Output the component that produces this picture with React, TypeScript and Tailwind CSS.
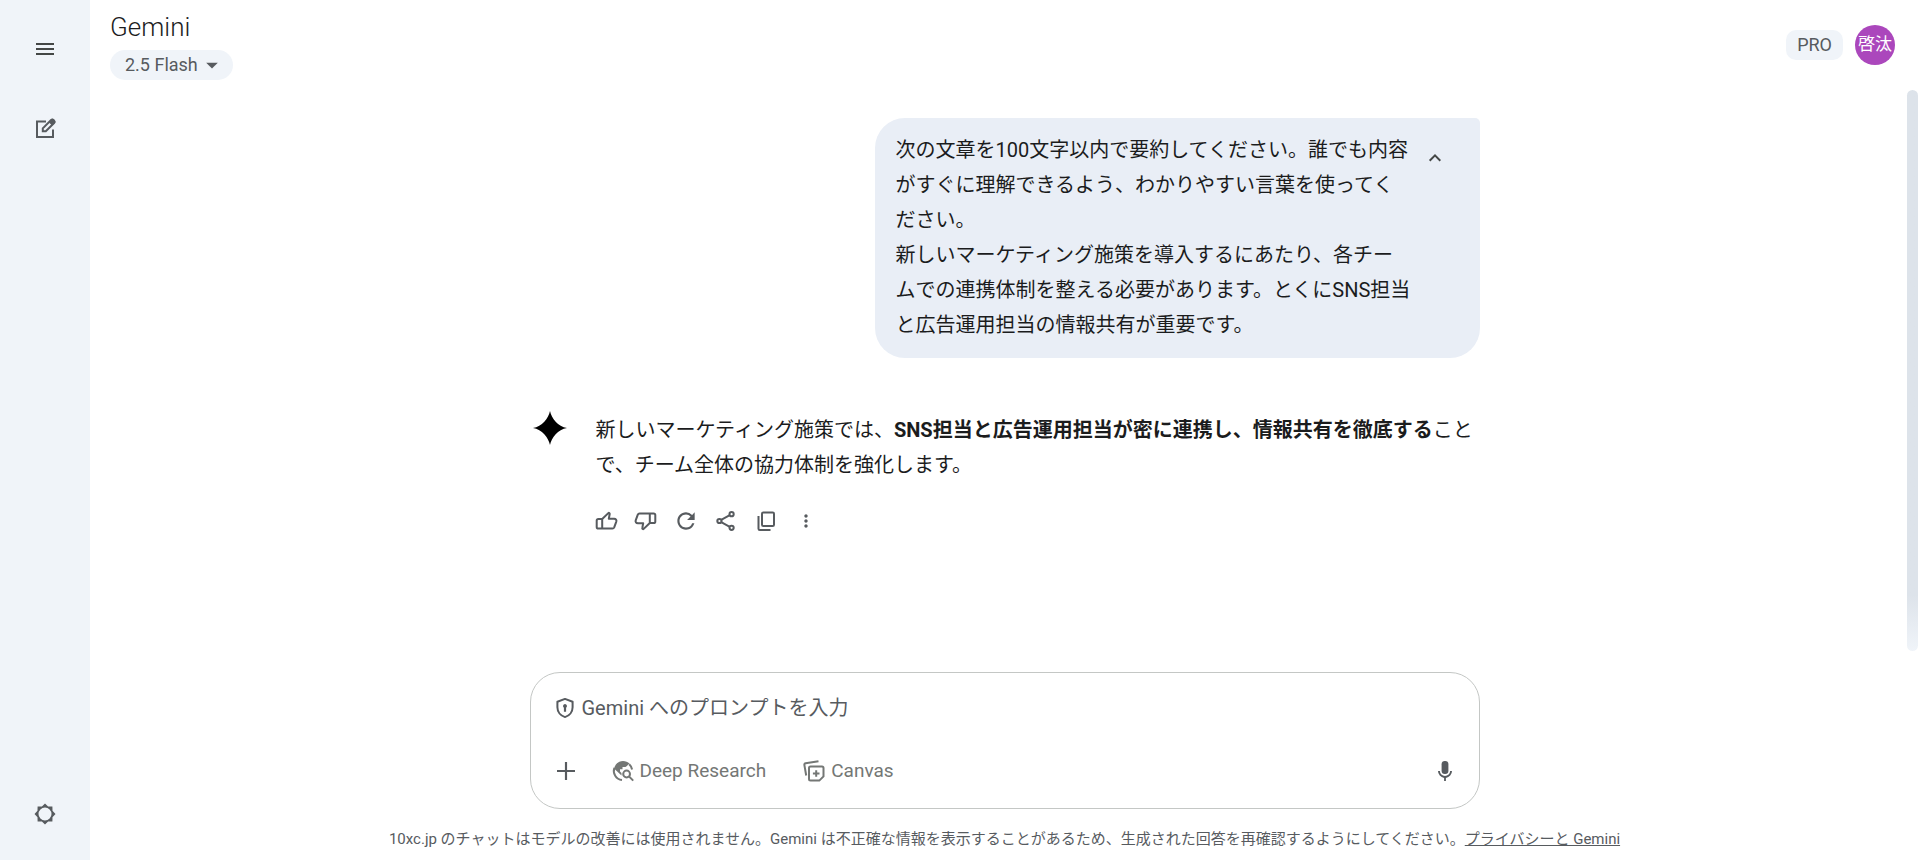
import type { ReactNode, SVGProps } from 'react';
import { MdMenu, MdArrowDropDown, MdMoreVert, MdRefresh } from 'react-icons/md';

function Icon({ children, className = 'size-6', ...rest }: SVGProps<SVGSVGElement> & { children: ReactNode }) {
  return (
    <svg viewBox="0 0 24 24" fill="none" stroke="currentColor" strokeWidth="2" aria-hidden="true" className={`shrink-0 ${className}`} {...rest}>
      {children}
    </svg>
  );
}

const thumbPath =
  'M8.2 10v9.500h10.300c.9 0 1.400-.5 1.700-1.200l2.100-5.700c.5-1.600-.5-2.900-2.100-2.900h-5.400l.9-4.700c.2-.9-.7-1.600-1.400-.9zM8.200 10H4.400c-1 0-1.700.7-1.700 1.600v6.300c0 .9.7 1.600 1.700 1.600h3.800';

function NewChatIcon() {
  return (
    <Icon>
      <path d="M13 4.500H4v15.500h16V12.500" />
      <path d="M9.800 14.300v-3l8.300-8.300c.7-.7 1.700-.7 2.400 0l.6.600c.7.7.7 1.700 0 2.400l-8.300 8.300z" />
      <path d="M17.200 5.200l2-2.200 2 2-2.200 2z" fill="currentColor" />
    </Icon>
  );
}

function SettingsIcon() {
  return (
    <Icon fill="currentColor" stroke="none">
      <path
        fillRule="evenodd"
        d="M12 1.500l3.100 2.900 4.300.1.100 4.300L22.500 12l-3 3.200-.1 4.300-4.300.1L12 22.500l-3.100-2.900-4.300-.1-.1-4.300L1.500 12l3-3.200.1-4.300 4.300-.1zM12 5.500a6.500 6.500 0 100 13 6.500 6.500 0 000-13z"
      />
    </Icon>
  );
}

function ShieldIcon() {
  return (
    <Icon>
      <path d="M12 2.900l7.600 2.800v5.500c0 4.700-3.200 8.600-7.600 9.900-4.400-1.300-7.600-5.200-7.600-9.900V5.700z" strokeLinejoin="round" />
      <path d="M12 7.900a2.100 2.100 0 011.100 3.800v4h-2.200v-4A2.100 2.100 0 0112 7.900z" fill="currentColor" stroke="none" />
    </Icon>
  );
}

function ResearchIcon() {
  return (
    <Icon>
      <path d="M11 21.100A9.200 9.200 0 013.400 8.800M18.200 5.200a9.200 9.200 0 012.900 5.300" />
      <path d="M3 9.500C4.200 5 7.800 2 12 2c2.600 0 4.800.9 6.500 2.400l-2.400 2.400c-.7.9-1.400 1.200-2.600 1.200h-2v2.200H9v2.300l1.500 1.500v2.500z" fill="currentColor" stroke="none" />
      <circle cx="15.600" cy="15" r="3.400" />
      <path d="M18 17.400l4.200 4.200" />
    </Icon>
  );
}

function CanvasIcon() {
  return (
    <Icon>
      <path d="M4.200 16.500L2.400 6.200c-.2-1 .4-1.700 1.200-1.900L16.500 2.300" />
      <path d="M8.500 7.500h11.500c.9 0 1.500.6 1.500 1.500v8.400l-4.200 4.200H8.500c-.9 0-1.500-.6-1.500-1.500V9c0-.9.6-1.500 1.500-1.500z" />
      <path d="M14.200 11.200v6.600M10.900 14.500h6.600" />
    </Icon>
  );
}

function ActionButton({ label, children }: { label: string; children: ReactNode }) {
  return (
    <button type="button" aria-label={label} className="flex size-10 items-center justify-center rounded-full hover:bg-slate-100">
      {children}
    </button>
  );
}

function Sidebar() {
  return (
    <nav className="flex w-[90px] shrink-0 flex-col items-center bg-[#f0f4f9] pt-6 pb-[26px] text-[#575b5f]">
      <button type="button" aria-label="メインメニュー" className="flex size-[50px] items-center justify-center text-[#444746]">
        <MdMenu className="size-6" />
      </button>
      <button type="button" aria-label="チャットを新規作成" className="mt-[30px] flex size-[50px] items-center justify-center">
        <NewChatIcon />
      </button>
      <button type="button" aria-label="設定とヘルプ" className="mt-auto flex size-10 items-center justify-center">
        <SettingsIcon />
      </button>
    </nav>
  );
}

function Header() {
  return (
    <header className="flex h-[90px] shrink-0 items-start justify-between pl-5 pr-6">
      <div className="flex flex-col items-start pt-2.5">
        <h1 className="text-[26px] font-light leading-[35px] text-[#1b1c1d]">Gemini</h1>
        <button type="button" className="mt-[5px] flex h-[30px] items-center rounded-full bg-[#f0f4f9] pl-[15px] pr-[7px] text-lg text-[#575b5f]">
          2.5 Flash
          <MdArrowDropDown className="size-7" />
        </button>
      </div>
      <div className="flex items-center gap-3 pt-[25px]">
        <span className="flex h-[30px] items-center rounded-[10px] bg-[#f0f4f9] px-[11px] text-lg text-[#575b5f]">PRO</span>
        <button type="button" className="flex size-10 items-center justify-center rounded-full bg-[#ab47bc] text-[17px] text-white">
          啓汰
        </button>
      </div>
    </header>
  );
}

function Conversation() {
  return (
    <section className="relative flex flex-1 flex-col items-center">
      <div className="flex w-full max-w-[950px] flex-col pt-7 text-xl leading-[35px] text-[#1b1c1d]">
        <div className="flex max-w-[605px] self-end rounded-[30px] rounded-tr-[5px] bg-[#e9eef6] pt-[15px] pr-5 pb-[15px] pl-[21px]">
          <p className="flex-1">
            次の文章を100文字以内で要約してください。誰でも内容がすぐに理解できるよう、わかりやすい言葉を使ってください。
            <br />
            新しいマーケティング施策を導入するにあたり、各チームでの連携体制を整える必要があります。とくにSNS担当と広告運用担当の情報共有が重要です。
          </p>
          <button type="button" aria-label="折りたたむ" className="flex size-[49px] shrink-0 items-center justify-center text-[#444746]">
            <Icon>
              <path d="M6.700 14.700L12 9.400l5.300 5.300" />
            </Icon>
          </button>
        </div>
        <div className="mt-[50px] flex gap-[26px]">
          <Icon className="size-10" viewBox="0 0 40 40" fill="#000" stroke="none">
            <path d="M20 3c1.500 7.500 8 15.500 17 17-9 1.500-15.500 9.500-17 17-1.500-7.500-8-15.500-17-17 9-1.500 15.500-9.500 17-17z" />
          </Icon>
          <div className="flex-1 pt-[5px]">
            <p>
              新しいマーケティング施策では、<strong className="font-bold">SNS担当と広告運用担当が密に連携し、情報共有を徹底する</strong>ことで、チーム全体の協力体制を強化します。
            </p>
            <div className="-ml-2.5 mt-[18px] flex text-[#575b5f]">
              <ActionButton label="良い回答">
                <Icon>
                  <path d={thumbPath} strokeLinejoin="round" />
                </Icon>
              </ActionButton>
              <ActionButton label="悪い回答">
                <Icon className="size-6 rotate-180">
                  <path d={thumbPath} strokeLinejoin="round" />
                </Icon>
              </ActionButton>
              <ActionButton label="やり直す">
                <MdRefresh className="size-[26px]" />
              </ActionButton>
              <ActionButton label="共有とエクスポート">
                <Icon>
                  <path d="M7.200 10.900l8.600-4.700M7.200 13.100l8.600 4.700" />
                  <circle cx="5.400" cy="12" r="2.100" />
                  <circle cx="17.600" cy="5.200" r="2.100" />
                  <circle cx="17.600" cy="18.800" r="2.100" />
                </Icon>
              </ActionButton>
              <ActionButton label="コピー">
                <Icon>
                  <rect x="8" y="3.500" width="12" height="13.500" rx="1.300" />
                  <path d="M4.500 7v12.700c0 .8.500 1.300 1.300 1.300H16.500" />
                </Icon>
              </ActionButton>
              <ActionButton label="その他">
                <MdMoreVert className="size-5" />
              </ActionButton>
            </div>
          </div>
        </div>
      </div>
      <div className="absolute right-px top-0 bottom-[21px] w-[11px] rounded-full bg-linear-to-b from-[#dde3ea] from-90% to-[#f0f4f9]" />
    </section>
  );
}

function Composer() {
  return (
    <form className="mx-auto flex h-[137px] w-full max-w-[950px] flex-col justify-between rounded-[30px] border border-[#c4c7c5] px-[22px] pt-5 pb-[17px] text-[#575b5f]">
      <label className="flex items-center gap-[5px]">
        <ShieldIcon />
        <input
          type="text"
          aria-label="プロンプト"
          placeholder="Gemini へのプロンプトを入力"
          className="h-[30px] flex-1 bg-transparent text-xl outline-none placeholder:text-[#575b5f] placeholder:opacity-100"
        />
      </label>
      <div className="flex h-10 items-center text-[19px] text-[#747775]">
        <button type="button" aria-label="ファイルを追加" className="mr-8 flex items-center text-[#575b5f]">
          <Icon className="size-[26px]">
            <path d="M12 3.700v16.600M3.700 12h16.600" />
          </Icon>
        </button>
        <button type="button" className="mr-9 flex items-center gap-[5px]">
          <ResearchIcon />
          Deep Research
        </button>
        <button type="button" className="flex items-center gap-[5px]">
          <CanvasIcon />
          Canvas
        </button>
        <button type="button" aria-label="マイク" className="ml-auto text-[#575b5f]">
          <Icon fill="currentColor" stroke="none">
            <rect x="8.600" y="2" width="6.800" height="13" rx="3.200" />
            <path d="M5 12h1.900a5.100 5.100 0 0010.200 0H19a7 7 0 01-6.100 6.900V22h-1.800v-3.100A7 7 0 015 12z" />
          </Icon>
        </button>
      </div>
    </form>
  );
}

export default function App() {
  return (
    <div lang="ja" className="flex h-screen overflow-hidden bg-white font-[Roboto,'Noto_Sans_CJK_JP',sans-serif]">
      <Sidebar />
      <main className="flex min-w-0 flex-1 flex-col">
        <Header />
        <Conversation />
        <Composer />
        <p className="pt-[18px] pb-[9px] text-center text-[15px] leading-6 text-[#575b5f]">
          10xc.jp のチャットはモデルの改善には使用されません。Gemini は不正確な情報を表示することがあるため、生成された回答を再確認するようにしてください。
          <a href="#privacy" className="underline">
            プライバシーと Gemini
          </a>
        </p>
      </main>
    </div>
  );
}
